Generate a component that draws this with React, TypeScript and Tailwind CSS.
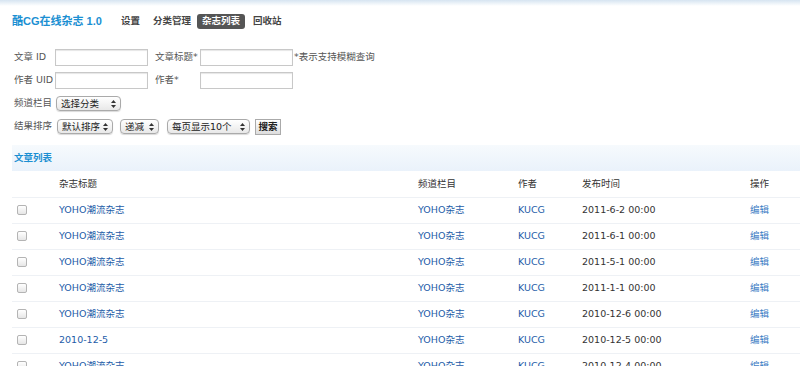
import React from "react";

const font = { fontFamily: '"DejaVu Sans", "Noto Sans CJK SC", sans-serif' };
const logoFont = { fontFamily: '"Liberation Sans", "Noto Sans CJK SC", sans-serif' };

const rows = [
  { title: "YOHO潮流杂志", date: "2011-6-2 00:00" },
  { title: "YOHO潮流杂志", date: "2011-6-1 00:00" },
  { title: "YOHO潮流杂志", date: "2011-5-1 00:00" },
  { title: "YOHO潮流杂志", date: "2011-1-1 00:00" },
  { title: "YOHO潮流杂志", date: "2010-12-6 00:00" },
  { title: "2010-12-5", date: "2010-12-5 00:00" },
  { title: "YOHO潮流杂志", date: "2010-12-4 00:00" },
];

const Arrows = () => (
  <svg width="5" height="8" viewBox="0 0 5 8" className="shrink-0">
    <path d="M2.5 0 L5 3 L0 3 Z" fill="#333" />
    <path d="M2.5 8 L5 5 L0 5 Z" fill="#333" />
  </svg>
);

const Select = ({ label, width }: { label: string; width: string }) => (
  <div
    className={`${width} shrink-0 h-[15px] flex items-center justify-between pl-[4px] pr-[4px] rounded-[4px] border border-[#aaa] bg-gradient-to-b from-white to-[#e8e8e8] text-[#222] shadow-[0_1px_1px_rgba(0,0,0,0.15)]`}
  >
    <span className="leading-none">{label}</span>
    <Arrows />
  </div>
);

const Input = ({ width }: { width: string }) => (
  <div className={`${width} shrink-0 h-[17px] border border-[#c8c8c8] bg-white shadow-[inset_0_1px_1px_rgba(0,0,0,0.1)]`} />
);

const Checkbox = () => (
  <span className="block w-[10px] h-[10px] rounded-[2px] border border-[#b4b4b4] bg-gradient-to-b from-white to-[#e6e6e6]" />
);

export default function App() {
  return (
    <div className="w-[800px] h-[366px] overflow-hidden bg-white text-[9.5px] text-[#555] whitespace-nowrap" style={font}>
      <div className="h-[6px] bg-gradient-to-b from-[#d6e4f1] to-white" />
      <div className="h-[30px] flex items-center pl-[12px]">
        <span className="text-[11px] font-bold text-[#1b8fd2] w-[109px] shrink-0" style={logoFont}>
          酷CG在线杂志 1.0
        </span>
        <nav className="flex items-center text-[#444] font-bold">
          <span>设置</span>
          <span className="ml-[13px]">分类管理</span>
          <span className="ml-[6px] px-[5px] h-[15px] flex items-center rounded-[3px] bg-[#555] text-white">杂志列表</span>
          <span className="ml-[8px]">回收站</span>
        </nav>
      </div>

      <div className="pl-[14px] pt-[13px] flex flex-col gap-[6px]">
        <div className="h-[17px] flex items-center">
          <span className="w-[41px] shrink-0">文章 ID</span>
          <Input width="w-[93px]" />
          <span className="w-[45px] ml-[7px] shrink-0">文章标题*</span>
          <Input width="w-[93px]" />
          <span className="ml-[1px]">*表示支持模糊查询</span>
        </div>
        <div className="h-[17px] flex items-center">
          <span className="w-[41px] shrink-0">作者 UID</span>
          <Input width="w-[93px]" />
          <span className="w-[45px] ml-[7px] shrink-0">作者*</span>
          <Input width="w-[93px]" />
        </div>
        <div className="h-[17px] flex items-center">
          <span className="w-[42px] shrink-0">频道栏目</span>
          <Select label="选择分类" width="w-[65px]" />
        </div>
        <div className="h-[17px] flex items-center">
          <span className="w-[43px] shrink-0">结果排序</span>
          <Select label="默认排序" width="w-[56px]" />
          <span className="w-[7px] shrink-0" />
          <Select label="递减" width="w-[39px]" />
          <span className="w-[8px] shrink-0" />
          <Select label="每页显示10个" width="w-[83px]" />
          <button className="ml-[5px] h-[16px] w-[26px] shrink-0 border border-[#aaa] bg-gradient-to-b from-white to-[#ddd] text-[9.5px] font-bold text-[#222] leading-none">
            搜索
          </button>
        </div>
      </div>

      <div className="ml-[12px] mt-[10px] h-[26px] flex items-center pl-[2px] bg-gradient-to-b from-[#f6fafd] to-[#eaf2fb]">
        <span className="font-bold text-[#1b8fd2]">文章列表</span>
      </div>

      <table className="ml-[12px] w-[788px] table-fixed border-collapse">
        <colgroup>
          <col className="w-[47px]" />
          <col className="w-[359px]" />
          <col className="w-[100px]" />
          <col className="w-[64px]" />
          <col className="w-[168px]" />
          <col className="w-[50px]" />
        </colgroup>
        <thead>
          <tr className="h-[26px] border-b border-[#eef1f5] text-[#333] text-left">
            <th className="font-normal" />
            <th className="font-normal">杂志标题</th>
            <th className="font-normal">频道栏目</th>
            <th className="font-normal">作者</th>
            <th className="font-normal">发布时间</th>
            <th className="font-normal">操作</th>
          </tr>
        </thead>
        <tbody>
          {rows.map((r, i) => (
            <tr key={i} className="h-[26px] border-b border-[#eef1f5]">
              <td className="pl-[5px]">
                <Checkbox />
              </td>
              <td className="text-[#1d5ca8]">{r.title}</td>
              <td className="text-[#1d5ca8]">YOHO杂志</td>
              <td className="text-[#1d5ca8]">KUCG</td>
              <td className="text-[#333]">{r.date}</td>
              <td className="text-[#3c7cc4]">编辑</td>
            </tr>
          ))}
        </tbody>
      </table>
    </div>
  );
}
